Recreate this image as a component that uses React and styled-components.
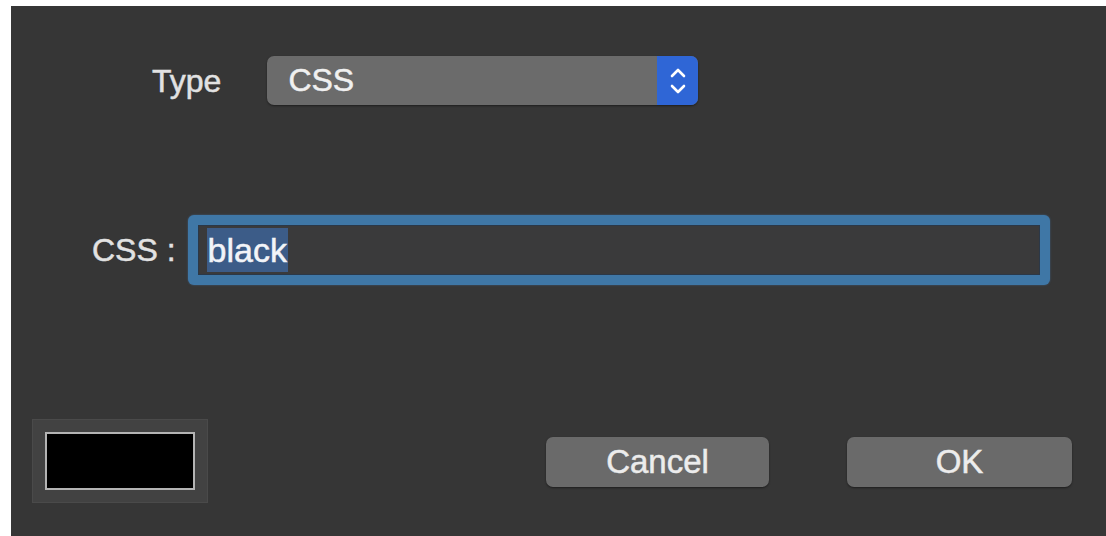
import React from 'react';
import styled, { createGlobalStyle } from 'styled-components';

const GlobalStyle = createGlobalStyle`
  html, body {
    margin: 0;
    padding: 0;
    background: #ffffff;
  }
  body {
    font-family: "Liberation Sans", Arial, sans-serif;
  }
`;

const Sheet = styled.div`
  margin: 6px 0 0 11px;
  width: 1095px;
  height: 530px;
  background: #363636;
  display: flex;
  flex-direction: column;
  box-sizing: border-box;
  color: #e4e4e4;
`;

const Row = styled.div`
  display: flex;
  align-items: center;
  margin-top: ${({ top }) => top}px;
  padding-left: ${({ left }) => left}px;
  gap: ${({ gap }) => gap}px;
`;

const Label = styled.span`
  font-size: 32px;
  line-height: 1;
  color: #e2e2e2;
  white-space: pre;
  -webkit-text-stroke: 0.5px #e2e2e2;
`;

const Select = styled.div`
  width: 431px;
  height: 49px;
  border-radius: 7px;
  background: #6b6b6b;
  display: flex;
  align-items: center;
  box-shadow: 0 1px 2px rgba(0, 0, 0, 0.45);
  overflow: hidden;
`;

const SelectValue = styled.span`
  flex: 1;
  padding-left: 21px;
  font-size: 32px;
  color: #f0f0f0;
  -webkit-text-stroke: 0.5px #f0f0f0;
`;

const Stepper = styled.div`
  width: 41px;
  height: 100%;
  background: #2f66d6;
  display: flex;
  align-items: center;
  justify-content: center;
`;

const Field = styled.div`
  width: 862px;
  height: 70px;
  box-sizing: border-box;
  border-radius: 6px;
  padding: 10px;
  background: #3f77a6;
  box-shadow: 0 0 2px rgba(70, 130, 190, 0.6);
`;

const FieldInner = styled.div`
  height: 100%;
  background: #3a3a3b;
  box-shadow: inset 0 0 0 1px #2b3848;
  display: flex;
  align-items: center;
  padding-left: 9px;
`;

const Selected = styled.span`
  background: #3c5c88;
  color: #f2f4f8;
  font-size: 34px;
  line-height: 44px;
  padding: 0 1px;
  -webkit-text-stroke: 0.5px #f2f4f8;
`;

const Footer = styled.div`
  margin-top: 134px;
  padding: 0 34px 0 21px;
  display: flex;
  align-items: center;
  justify-content: space-between;
`;

const Well = styled.div`
  width: 176px;
  height: 84px;
  box-sizing: border-box;
  padding: 12px;
  background: #424242;
  border: 1px solid #4a4a4a;
`;

const Swatch = styled.div`
  height: 100%;
  background: ${({ color }) => color};
  border: 2px solid #b4b4b4;
  box-sizing: border-box;
`;

const Buttons = styled.div`
  display: flex;
  gap: 78px;
  margin-top: 2px;
`;

const Button = styled.button`
  width: ${({ w }) => w}px;
  height: 50px;
  border: none;
  border-radius: 7px;
  background: #6a6a6a;
  color: #ececec;
  font-family: "Liberation Sans", Arial, sans-serif;
  font-size: 33px;
  -webkit-text-stroke: 0.5px #ececec;
  box-shadow: 0 1px 2px rgba(0, 0, 0, 0.45);
  padding: 0;
  cursor: pointer;
`;

const Chevrons = () => (
  <svg width="20" height="30" viewBox="0 0 20 30" fill="none" stroke="#ffffff" strokeWidth="2.6" strokeLinecap="round" strokeLinejoin="round">
    <path d="M4 10 L10 4 L16 10" />
    <path d="M4 20 L10 26 L16 20" />
  </svg>
);

const App = () => (
  <>
    <GlobalStyle />
    <Sheet>
      <Row top={50} left={141} gap={46}>
        <Label>Type</Label>
        <Select>
          <SelectValue>CSS</SelectValue>
          <Stepper>
            <Chevrons />
          </Stepper>
        </Select>
      </Row>
      <Row top={110} left={81} gap={12}>
        <Label>CSS :</Label>
        <Field>
          <FieldInner>
            <Selected>black</Selected>
          </FieldInner>
        </Field>
      </Row>
      <Footer>
        <Well>
          <Swatch color="#000000" />
        </Well>
        <Buttons>
          <Button w={223}>Cancel</Button>
          <Button w={225}>OK</Button>
        </Buttons>
      </Footer>
    </Sheet>
  </>
);

export default App;
